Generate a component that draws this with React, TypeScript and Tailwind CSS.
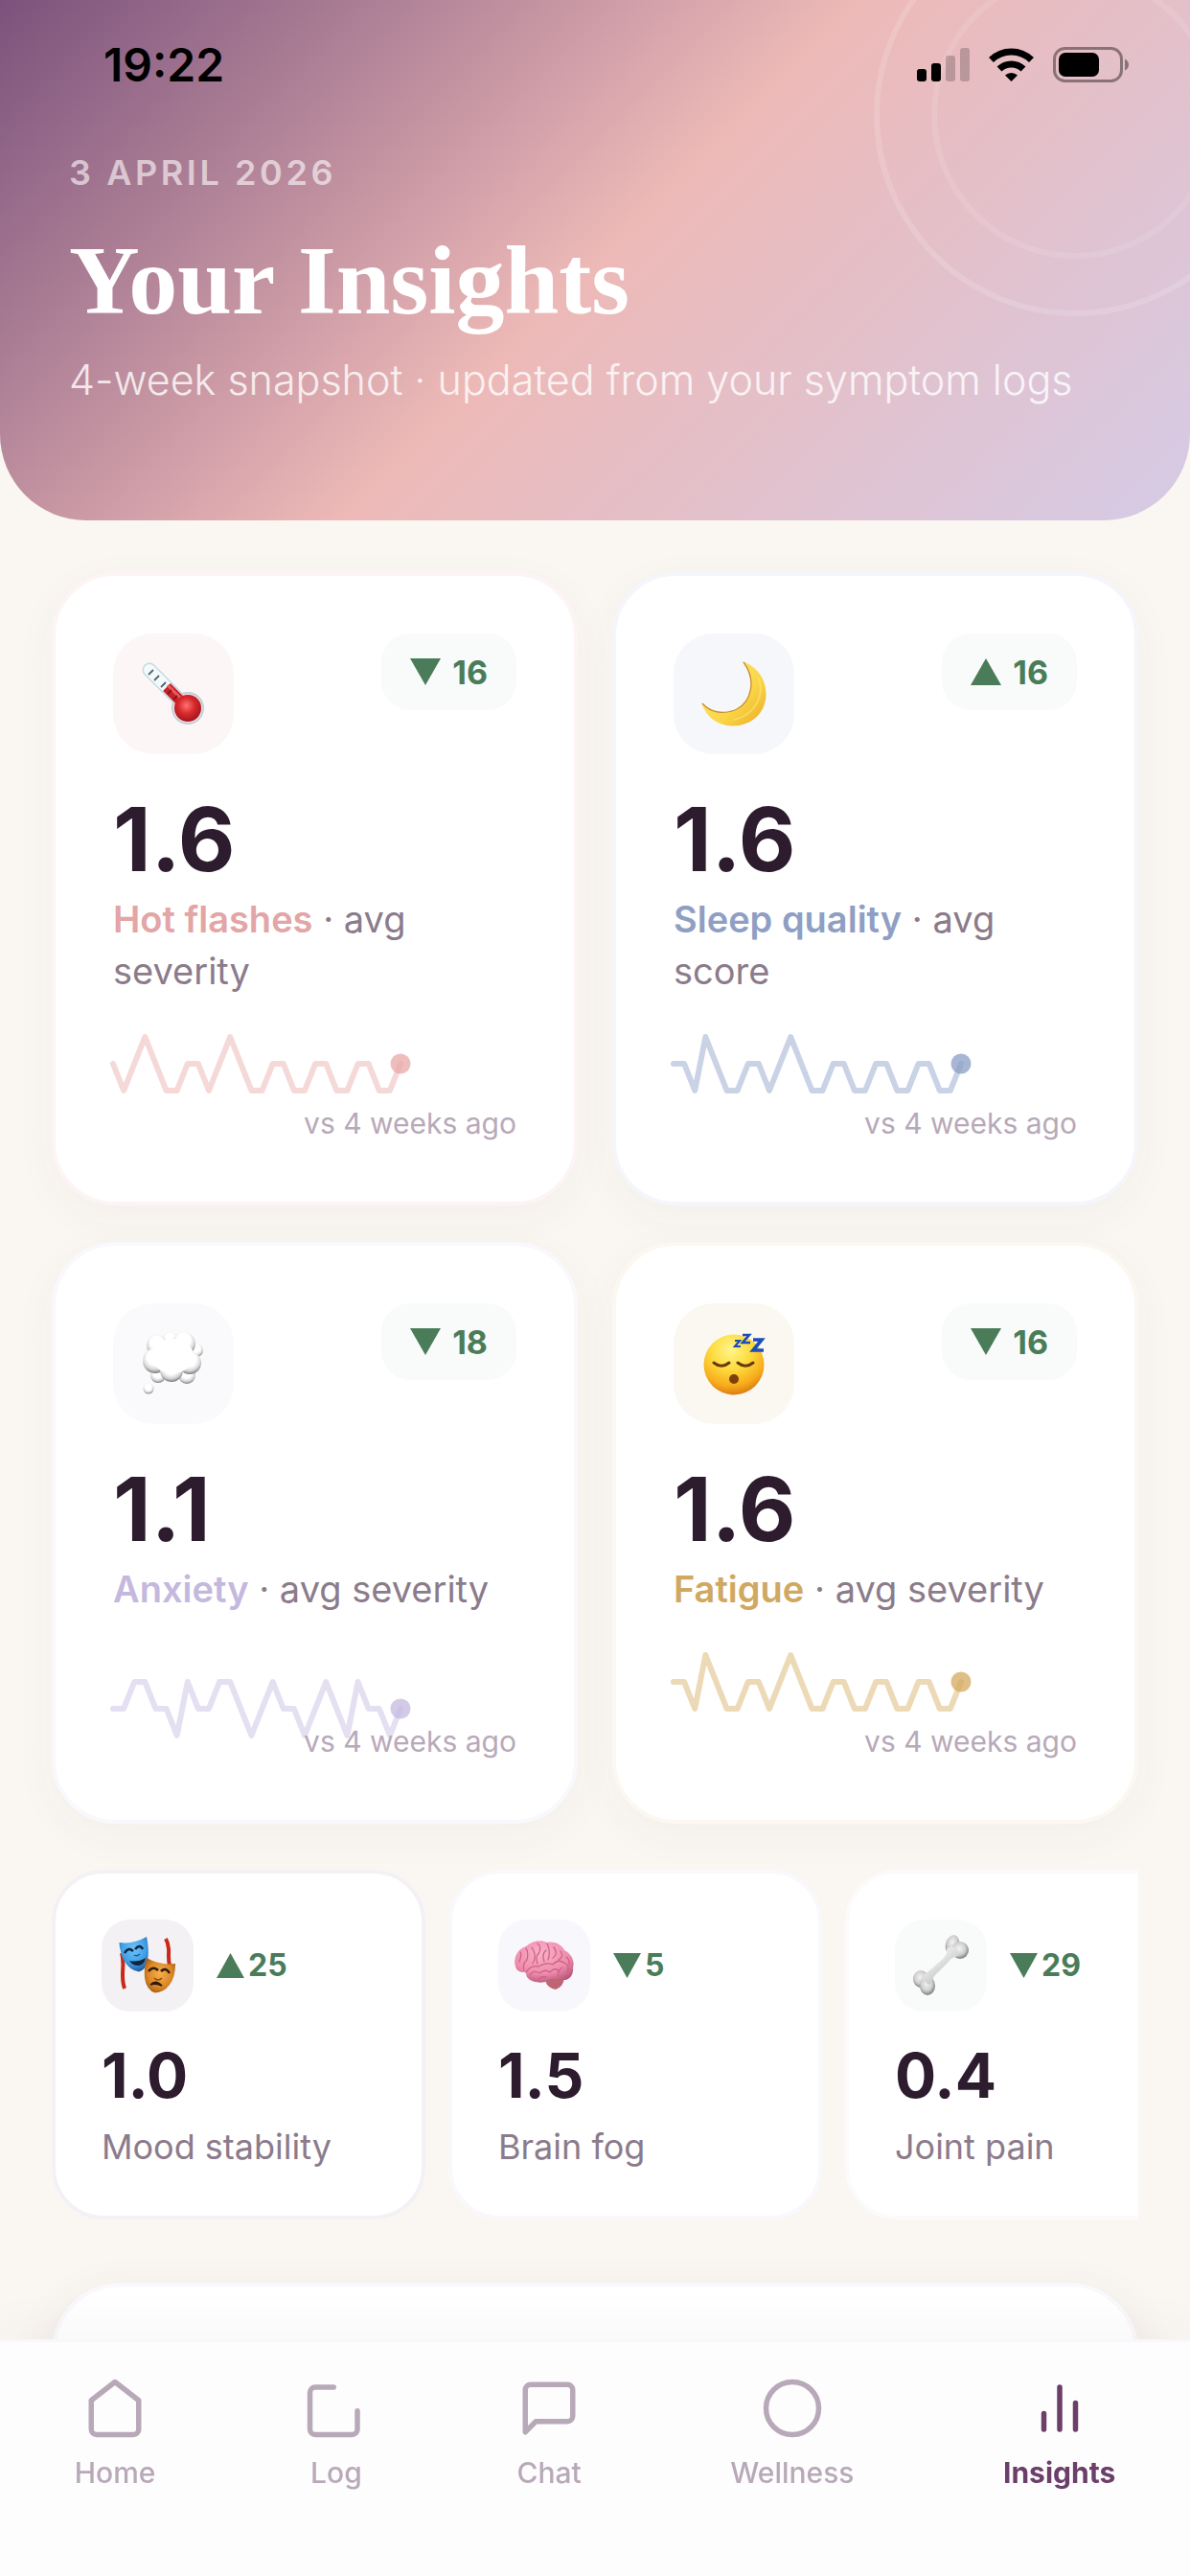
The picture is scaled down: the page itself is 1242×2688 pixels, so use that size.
import { useState, type ReactNode } from 'react';
import clsx from 'clsx';

interface Metric {
  name: string;
  value: string;
  change: number;
  direction: 'up' | 'down';
  icon: ReactNode;
  tile: string;
  border: string;
}

interface TrendMetric extends Metric {
  unit: string;
  label: string;
  stroke: string;
  series: number[];
}

/* ---------- Illustrations ---------- */

const Thermometer = () => (
  <svg viewBox="0 0 66 66" className="h-[66px] w-[66px]" aria-hidden="true">
    <defs>
      <radialGradient id="bulb" cx="45%" cy="40%" r="60%">
        <stop offset="0" stopColor="#ff7470" />
        <stop offset="0.5" stopColor="#d92a2e" />
        <stop offset="1" stopColor="#a3161c" />
      </radialGradient>
    </defs>
    <path d="M8 8L46 46" stroke="#c3dbe2" strokeWidth="15" strokeLinecap="round" />
    <circle cx="48" cy="48" r="17" fill="#b9cfd6" />
    <path d="M8 8L46 46" stroke="#f3fafc" strokeWidth="12" strokeLinecap="round" />
    <circle cx="48" cy="48" r="15.500" fill="#eed8da" />
    <path d="M26 26L44 44" stroke="#c5222a" strokeWidth="11" />
    <path d="M27 24L44 41" stroke="#ea5a5c" strokeWidth="3" />
    <circle cx="48" cy="48" r="14" fill="url(#bulb)" />
    <path d="M7 13l5-5M13 19l5-5M20 26l5-5" stroke="#5a646b" strokeWidth="1.800" />
    <path d="M27 33l4-4M33 39l4-4" stroke="#8e1218" strokeWidth="1.800" />
  </svg>
);

const Moon = () => (
  <svg viewBox="0 0 68 68" className="h-[68px] w-[68px]" aria-hidden="true">
    <defs>
      <linearGradient id="moon" x1="0.2" y1="0.2" x2="0.9" y2="0.9">
        <stop offset="0" stopColor="#fbe46a" />
        <stop offset="0.6" stopColor="#fad545" />
        <stop offset="1" stopColor="#efb52c" />
      </linearGradient>
    </defs>
    <path
      d="M43.500 0C58 6 67.500 18 67.500 34C67.500 54 52 67.500 33 67.500C17 67.500 5 58 0 43.500C10 54 24 56 37 50C52 42 58 20 43.500 0Z"
      fill="url(#moon)"
    />
    <path d="M44 1C58 20 52 42 37 50C24 56 10 54 1 44" fill="none" stroke="#c98f2e" strokeWidth="1.300" />
    <path d="M60 18C66 36 56 56 34 61" fill="none" stroke="#fdea8c" strokeWidth="2" strokeLinecap="round" opacity="0.5" />
  </svg>
);

const Thought = () => (
  <svg viewBox="0 0 66 68" className="h-[68px] w-[66px]" aria-hidden="true">
    <defs>
      <radialGradient id="puff" cx="48%" cy="36%" r="62%">
        <stop offset="0.5" stopColor="#ffffff" />
        <stop offset="0.8" stopColor="#d4d4d4" />
        <stop offset="1" stopColor="#858585" />
      </radialGradient>
    </defs>
    <g fill="url(#puff)">
      <circle cx="30" cy="10" r="9" />
      <circle cx="57" cy="20" r="7" />
      <circle cx="17" cy="46" r="8" />
      <circle cx="47" cy="46" r="9" />
      <circle cx="16" cy="15" r="11" />
      <circle cx="44" cy="13" r="12" />
      <circle cx="14" cy="31" r="13" />
      <circle cx="50" cy="33" r="12" />
      <circle cx="31" cy="41" r="12" />
      <circle cx="7" cy="60" r="5.500" />
    </g>
    <ellipse cx="32" cy="26" rx="22" ry="18" fill="#fff" />
  </svg>
);

const Sleepy = () => (
  <svg viewBox="0 0 66 66" className="h-[66px] w-[66px]" aria-hidden="true">
    <defs>
      <radialGradient id="face" cx="45%" cy="25%" r="75%">
        <stop offset="0" stopColor="#fff58c" />
        <stop offset="0.45" stopColor="#fddb3c" />
        <stop offset="0.8" stopColor="#f8ac1c" />
        <stop offset="1" stopColor="#dd7d10" />
      </radialGradient>
    </defs>
    <circle cx="33" cy="34" r="31.500" fill="url(#face)" />
    <path d="M12 32q8 6.500 16 0M37 32q8 6.500 16 0" fill="none" stroke="#6b3a0a" strokeWidth="3" strokeLinecap="round" />
    <ellipse cx="33" cy="49" rx="5" ry="5" fill="#7a4208" />
    <g fill="none" stroke="#1c4db8" strokeLinejoin="miter">
      <path d="M34 9h5l-5 6h6" strokeWidth="2.200" />
      <path d="M42 3h7l-7 8h8" strokeWidth="2.600" />
      <path d="M53 8h9l-9 11h11" strokeWidth="3.600" />
    </g>
  </svg>
);

const Masks = () => (
  <svg viewBox="0 0 60 60" className="h-[60px] w-[60px]" aria-hidden="true">
    <defs>
      <radialGradient id="comedy" cx="50%" cy="35%" r="70%">
        <stop offset="0" stopColor="#6cc4fa" />
        <stop offset="0.6" stopColor="#3f9ee4" />
        <stop offset="1" stopColor="#1b4f92" />
      </radialGradient>
      <radialGradient id="tragedy" cx="50%" cy="45%" r="65%">
        <stop offset="0" stopColor="#f7b04c" />
        <stop offset="0.6" stopColor="#db8626" />
        <stop offset="1" stopColor="#94500f" />
      </radialGradient>
    </defs>
    <path d="M3 17C7 30 1 40 6 54M49 2C55 12 50 18 53 30" fill="none" stroke="#c92a18" strokeWidth="4" />
    <path d="M0.500 6Q15 8 29 0Q32 15 30 24Q28 35 21 36.500Q11 35 5 24Q1 16 0.500 6Z" fill="url(#comedy)" />
    <path d="M6 17q4-7 9-2M17 13q5-6 8 0" fill="none" stroke="#10233f" strokeWidth="2.500" />
    <path d="M11 25Q20 27 28 22Q26 30 20 30Q14 30 11 25Z" fill="#10233f" />
    <path d="M16 19q3 2 6-1" fill="none" stroke="#1b5c9e" strokeWidth="1.500" />
    <path d="M29 22Q43 30 59 28Q59 42 53 50Q47 58 38 58.500Q29 56 27 43Q26 33 29 22Z" fill="url(#tragedy)" />
    <path d="M31 36q5-6 10-1M44 36q5-5 9 2" fill="none" stroke="#2c1a0c" strokeWidth="2.500" />
    <path d="M33 50Q39 44 45 51Q39 48 33 50Z" fill="#2c1a0c" stroke="#2c1a0c" strokeWidth="1.500" />
    <path d="M37 43q4 4 8 0" fill="none" stroke="#8a4c12" strokeWidth="1.500" />
  </svg>
);

const Brain = () => (
  <svg viewBox="0 0 62 52" className="h-[52px] w-[62px]" aria-hidden="true">
    <defs>
      <radialGradient id="cortex" cx="45%" cy="30%" r="75%">
        <stop offset="0" stopColor="#fbb0c8" />
        <stop offset="0.65" stopColor="#ef8cac" />
        <stop offset="1" stopColor="#b85478" />
      </radialGradient>
    </defs>
    <path d="M32 42Q40 36 52 39Q51 48 43 51Q35 50 32 42Z" fill="#bf6473" />
    <path
      d="M1 27C-2 18 4 8 12 6C18 0 28-1 34 2C42 0 50 5 52 10C60 14 63 22 61 28C62 36 57 42 50 41C44 42 40 38 36 41C30 46 18 43 15 40C11 37 13 33 11 33C5 33 2 31 1 27Z"
      fill="url(#cortex)"
    />
    <path
      d="M5 22Q8 14 6 12M10 31Q8 24 13 20Q15 12 12 8M19 24Q24 16 18 7M24 24Q21 17 26 12Q28 6 24 3M31 22Q28 14 33 10M35 20Q38 12 34 3M40 18Q46 14 41 7M46 20Q52 17 48 11M12 33Q17 25 25 27Q34 22 40 25Q46 18 53 24Q58 26 55 33M16 36Q20 30 26 34Q32 29 37 33Q42 27 47 32M46 37Q44 31 50 28M25 40Q28 37 33 38M54 17Q58 20 57 25"
      fill="none"
      stroke="#cc6488"
      strokeWidth="1.300"
      strokeLinecap="round"
    />
  </svg>
);

const Bone = () => (
  <svg viewBox="0 0 60 64" className="h-[64px] w-[60px]" aria-hidden="true">
    <defs>
      <linearGradient id="bone" x1="0.2" y1="0.2" x2="0.8" y2="0.9">
        <stop offset="0.2" stopColor="#ededed" />
        <stop offset="0.6" stopColor="#d2d2d2" />
        <stop offset="0.9" stopColor="#8a8a8a" />
      </linearGradient>
      <radialGradient id="knob" cx="45%" cy="40%" r="60%">
        <stop offset="0" stopColor="#f4f4f4" />
        <stop offset="0.6" stopColor="#cfcfcf" />
        <stop offset="1" stopColor="#7c7c7c" />
      </radialGradient>
    </defs>
    <g fill="url(#knob)">
      <ellipse cx="42" cy="10" rx="7" ry="10" transform="rotate(15 42 10)" />
      <ellipse cx="50" cy="16" rx="9" ry="9" />
      <ellipse cx="9" cy="46" rx="8" ry="9" />
      <ellipse cx="16" cy="53" rx="8" ry="10" />
    </g>
    <path d="M36 14C37 20 35 22 31 26L17 38C13 41 10 42 9 45L17 52C20 50 21 46 24 42L37 29C40 25 43 23 49 22L44 12Z" fill="url(#bone)" />
  </svg>
);

/* ---------- Data ---------- */

const TREND_METRICS: TrendMetric[] = [
  {
    name: 'Hot flashes',
    unit: 'avg severity',
    value: '1.6',
    change: 16,
    direction: 'down',
    icon: <Thermometer />,
    tile: 'bg-[#fdf6f7]',
    border: 'border-[#fdf4f5]',
    label: 'text-[#e3a5a6]',
    stroke: '#e8a8a8',
    series: [2, 1, 2, 3, 2, 1, 1, 2, 2, 1, 2, 3, 2, 1, 1, 2, 2, 1, 1, 2, 2, 1, 1, 2, 2, 1, 1, 2],
  },
  {
    name: 'Sleep quality',
    unit: 'avg score',
    value: '1.6',
    change: 16,
    direction: 'up',
    icon: <Moon />,
    tile: 'bg-[#f5f7fb]',
    border: 'border-[#f5f6fb]',
    label: 'text-[#8f9fc4]',
    stroke: '#8a9dc6',
    series: [2, 2, 1, 3, 2, 1, 1, 2, 2, 1, 2, 3, 2, 1, 1, 2, 2, 1, 1, 2, 2, 1, 1, 2, 2, 1, 1, 2],
  },
  {
    name: 'Anxiety',
    unit: 'avg severity',
    value: '1.1',
    change: 18,
    direction: 'down',
    icon: <Thought />,
    tile: 'bg-[#fafafc]',
    border: 'border-[#f9f8fc]',
    label: 'text-[#c4b8de]',
    stroke: '#c4b8e0',
    series: [1, 1, 2, 2, 1, 1, 0, 2, 1, 1, 2, 2, 1, 0, 1, 2, 1, 1, 0, 1, 2, 1, 0, 2, 1, 1, 0, 1],
  },
  {
    name: 'Fatigue',
    unit: 'avg severity',
    value: '1.6',
    change: 16,
    direction: 'down',
    icon: <Sleepy />,
    tile: 'bg-[#fbf8f1]',
    border: 'border-[#fcf8f1]',
    label: 'text-[#d0a860]',
    stroke: '#d4aa5e',
    series: [2, 2, 1, 3, 2, 1, 1, 2, 2, 1, 2, 3, 2, 1, 1, 2, 2, 1, 1, 2, 2, 1, 1, 2, 2, 1, 1, 2],
  },
];

const SMALL_METRICS: Metric[] = [
  { name: 'Mood stability', value: '1.0', change: 25, direction: 'up', icon: <Masks />, tile: 'bg-[#f3f1f4]', border: 'border-[#f3f1f5]' },
  { name: 'Brain fog', value: '1.5', change: 5, direction: 'down', icon: <Brain />, tile: 'bg-[#f8f7fc]', border: 'border-[#f9f8fc]' },
  { name: 'Joint pain', value: '0.4', change: 29, direction: 'down', icon: <Bone />, tile: 'bg-[#f9fbfa]', border: 'border-[#fafbfa]' },
];

const TABS = [
  { name: 'Home', icon: <path d="M3 9l9-7 9 7v11a2 2 0 0 1-2 2H5a2 2 0 0 1-2-2z" /> },
  { name: 'Log', icon: <path d="M11 4H4a2 2 0 0 0-2 2v14a2 2 0 0 0 2 2h14a2 2 0 0 0 2-2v-7" /> },
  { name: 'Chat', icon: <path d="M21 15a2 2 0 0 1-2 2H7l-4 4V5a2 2 0 0 1 2-2h14a2 2 0 0 1 2 2z" /> },
  { name: 'Wellness', icon: <circle cx="12" cy="12" r="10" /> },
  { name: 'Insights', icon: <path d="M18 20V10M12 20V4M6 20v-6" /> },
];

/* ---------- Components ---------- */

const StatusIcons = () => (
  <svg viewBox="0 0 222 38" className="h-[38px] w-[222px]" aria-label="Signal, Wi-Fi and battery" role="img">
    <rect x="0" y="23" width="10" height="13" rx="3" />
    <rect x="15" y="17" width="10" height="19" rx="3" />
    <rect x="30" y="9" width="10" height="27" rx="3" opacity="0.2" />
    <rect x="45" y="1" width="10" height="35" rx="3" opacity="0.2" />
    <path d="M98.500 36l-6.500-6.500a9.500 9.500 0 0 1 13 0z" />
    <path d="M86 23a18 18 0 0 1 25 0" fill="none" stroke="#000" strokeWidth="7" />
    <path d="M77.500 13.500a30 30 0 0 1 42 0" fill="none" stroke="#000" strokeWidth="7" />
    <rect x="143.500" y="1.500" width="70" height="34" rx="11" fill="none" stroke="#000" strokeOpacity="0.4" strokeWidth="3" />
    <rect x="148" y="6" width="42" height="25" rx="7" />
    <path d="M217 12.500q4 2 4 6t-4 6z" opacity="0.4" />
  </svg>
);

const Triangle = ({ direction, className }: { direction: 'up' | 'down'; className: string }) => (
  <svg viewBox="0 0 32 28" preserveAspectRatio="none" fill="currentColor" className={className} role="img" aria-label={direction}>
    <path d={direction === 'up' ? 'M16 0L32 28H0z' : 'M0 0h32L16 28z'} />
  </svg>
);

const Sparkline = ({ series, stroke }: { series: number[]; stroke: string }) => {
  const x = (i: number) => (i * 300) / (series.length - 1);
  const y = (v: number) => 90 - v * 28;
  const last = series.length - 1;

  return (
    <svg viewBox="0 0 300 96" className="h-[96px] w-[300px] overflow-visible" aria-hidden="true">
      <polyline
        points={series.map((v, i) => `${x(i)},${y(v)}`).join(' ')}
        fill="none"
        stroke={stroke}
        strokeOpacity="0.45"
        strokeWidth="6"
        strokeLinecap="round"
        strokeLinejoin="round"
      />
      <circle cx={x(last)} cy={y(series[last])} r="10.500" fill={stroke} fillOpacity="0.75" />
    </svg>
  );
};

const TrendCard = ({ metric }: { metric: TrendMetric }) => (
  <article
    className={clsx(
      'rounded-[66px] border-4 bg-white p-[60px] shadow-[0_12px_48px_rgba(74,44,74,0.04)]',
      metric.border
    )}
  >
    <div className="flex items-start justify-between">
      <div className={clsx('flex h-[126px] w-[126px] items-center justify-center rounded-[42px]', metric.tile)}>
        {metric.icon}
      </div>
      <div className="flex h-[80px] items-center gap-3 rounded-[30px] bg-[#f9fbfa] px-[30px] text-[#4a7c59]">
        <Triangle direction={metric.direction} className="h-[28px] w-[32px]" />
        <span className="text-[34px] font-bold">{metric.change}</span>
      </div>
    </div>
    <p className="mt-[41px] text-[92px] leading-[96px] font-bold text-[#2d1b2e]">{metric.value}</p>
    <p className="mt-2 text-[38px] leading-[54px] text-[#8b7b8b]">
      <strong className={clsx('font-semibold', metric.label)}>{metric.name}</strong> · {metric.unit}
    </p>
    <div className="mt-[36px]">
      <Sparkline series={metric.series} stroke={metric.stroke} />
      <p className="-mt-[22px] text-right text-[30px] leading-[44px] text-[#b8a9b9]">vs 4 weeks ago</p>
    </div>
  </article>
);

const SmallCard = ({ metric }: { metric: Metric }) => (
  <article className={clsx('w-[390px] shrink-0 rounded-[54px] border-4 bg-white p-[48px]', metric.border)}>
    <div className="flex items-center gap-6">
      <div className={clsx('flex h-[96px] w-[96px] items-center justify-center rounded-[30px]', metric.tile)}>
        {metric.icon}
      </div>
      <div className="flex items-center gap-1 text-[#4a7c59]">
        <Triangle direction={metric.direction} className="h-[26px] w-[29px]" />
        <span className="text-[32px] font-bold">{metric.change}</span>
      </div>
    </div>
    <p className="mt-[31px] text-[64px] leading-[72px] font-bold text-[#2d1b2e]">{metric.value}</p>
    <p className="mt-[14px] text-[36px] leading-[48px] text-[#8b7b8b]">{metric.name}</p>
  </article>
);

const Header = () => (
  <header className="relative overflow-hidden rounded-b-[90px] bg-[linear-gradient(135deg,#7b527c_0%,#edb9b7_50%,#d5cbe6_100%)] pb-[120px]">
    <div className="absolute -top-[90px] -right-[90px] h-[420px] w-[420px] rounded-full border-[6px] border-white/15" />
    <div className="absolute -top-[30px] -right-[30px] h-[300px] w-[300px] rounded-full border-[6px] border-white/10" />
    <div className="relative">
      <div className="flex items-center justify-between pt-[38px] pr-[63px] pl-[108px]">
        <span className="text-[48px] leading-[60px] font-semibold text-black">19:22</span>
        <StatusIcons />
      </div>
      <div className="px-[72px]">
        <p className="mt-[61px] text-[36px] leading-[42px] font-semibold tracking-widest text-white/60 uppercase">
          3 April 2026
        </p>
        <h1 className="mt-8 font-['Liberation_Serif',serif] text-[102px] leading-[120px] font-bold text-white">
          Your Insights
        </h1>
        <p className="mt-4 text-[43px] leading-[54px] font-light text-white/80">
          4-week snapshot · updated from your symptom logs
        </p>
      </div>
    </div>
  </header>
);

const TabBar = () => {
  const [active, setActive] = useState('Insights');

  return (
    <nav className="fixed inset-x-0 bottom-0 flex justify-around border-t-[3px] border-[#f8f7fb] bg-[#fefdfe] pt-[36px] pb-[90px] shadow-[0_-12px_48px_rgba(74,44,74,0.04)]">
      {TABS.map((tab) => (
        <button
          key={tab.name}
          onClick={() => setActive(tab.name)}
          className={clsx(
            'flex flex-col items-center gap-4 text-[30px] leading-[36px]',
            active === tab.name ? 'font-bold text-[#6b3f69]' : 'font-medium text-[#b8a9b9]'
          )}
        >
          <svg
            viewBox="0 0 24 24"
            className="h-[66px] w-[66px]"
            fill="none"
            stroke="currentColor"
            strokeWidth="2"
            strokeLinecap="round"
            strokeLinejoin="round"
            aria-hidden="true"
          >
            {tab.icon}
          </svg>
          {tab.name}
        </button>
      ))}
    </nav>
  );
};

export default function App() {
  return (
    <div className="flex min-h-screen flex-col bg-[#faf7f2] font-['Inter',sans-serif]">
      <Header />
      <main className="flex flex-1 flex-col px-[54px] pt-[54px]">
        <section className="grid grid-cols-2 gap-x-[36px] gap-y-[38px]">
          {TREND_METRICS.map((metric) => (
            <TrendCard key={metric.name} metric={metric} />
          ))}
        </section>
        <section className="mt-[48px] flex gap-6 overflow-x-auto [scrollbar-width:none]">
          {SMALL_METRICS.map((metric) => (
            <SmallCard key={metric.name} metric={metric} />
          ))}
        </section>
        {/* Next section, mostly behind the tab bar */}
        <section className="mt-[66px] flex-1 rounded-[72px] border-4 border-[#f9f8fc] bg-white shadow-[0_12px_48px_rgba(74,44,74,0.08)]" />
      </main>
      <TabBar />
    </div>
  );
}
